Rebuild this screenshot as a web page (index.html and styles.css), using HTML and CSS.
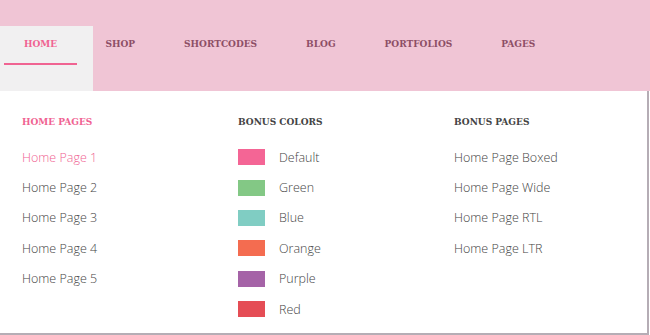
FILE: index.html
```html
<!DOCTYPE html>
<html lang="en">
<head>
    <meta charset="UTF-8">
    <meta name="viewport" content="width=device-width, initial-scale=1.0">
    <title>Mega Menu</title>
    <link rel="stylesheet" href="styles.css">
</head>
<body>
    <header class="header">
        <ul class="nav">
            <li class="nav-item active"><a href="#">Home</a></li>
            <li class="nav-item"><a href="#">Shop</a></li>
            <li class="nav-item"><a href="#">Shortcodes</a></li>
            <li class="nav-item"><a href="#">Blog</a></li>
            <li class="nav-item"><a href="#">Portfolios</a></li>
            <li class="nav-item"><a href="#">Pages</a></li>
        </ul>
    </header>
    <div class="mega-menu">
        <div class="column">
            <h4 class="column-title active">Home Pages</h4>
            <ul class="links">
                <li class="current"><a href="#">Home Page 1</a></li>
                <li><a href="#">Home Page 2</a></li>
                <li><a href="#">Home Page 3</a></li>
                <li><a href="#">Home Page 4</a></li>
                <li><a href="#">Home Page 5</a></li>
            </ul>
        </div>
        <div class="column">
            <h4 class="column-title">Bonus Colors</h4>
            <ul class="links">
                <li><span class="swatch default"></span><a href="#">Default</a></li>
                <li><span class="swatch green"></span><a href="#">Green</a></li>
                <li><span class="swatch blue"></span><a href="#">Blue</a></li>
                <li><span class="swatch orange"></span><a href="#">Orange</a></li>
                <li><span class="swatch purple"></span><a href="#">Purple</a></li>
                <li><span class="swatch red"></span><a href="#">Red</a></li>
            </ul>
        </div>
        <div class="column">
            <h4 class="column-title">Bonus Pages</h4>
            <ul class="links">
                <li><a href="#">Home Page Boxed</a></li>
                <li><a href="#">Home Page Wide</a></li>
                <li><a href="#">Home Page RTL</a></li>
                <li><a href="#">Home Page LTR</a></li>
            </ul>
        </div>
    </div>
</body>
</html>
```

FILE: styles.css
```css
body {
    margin: 0;
    font-family: "Open Sans", sans-serif;
    background-color: #ffffff;
}

.header {
    height: 91px;
    background-color: #f0c5d5;
}

.nav {
    display: flex;
    margin: 0;
    padding: 26px 0 0 0;
    list-style: none;
}

.nav-item {
    height: 65px;
    position: relative;
}

.nav-item a {
    display: block;
    padding: 11px 24.5px 0 24.5px;
    font-family: "DejaVu Serif", serif;
    font-stretch: condensed;
    font-size: 10px;
    font-weight: bold;
    line-height: 14px;
    text-transform: uppercase;
    text-decoration: none;
    color: #8d4f66;
}

.nav-item.active {
    width: 93px;
    margin-right: -12px;
    background-color: #f1f0f1;
}

.nav-item.active a {
    padding-left: 24px;
    color: #f06392;
}

.nav-item.active::after {
    content: "";
    position: absolute;
    left: 4px;
    top: 37px;
    width: 73px;
    height: 2px;
    background-color: #f06392;
}

.mega-menu {
    display: grid;
    grid-template-columns: 216px 216px 1fr;
    width: 625px;
    height: 242px;
    padding: 0 0 0 22px;
    border-right: 2px solid #b5adb5;
    border-bottom: 2px solid #b5adb5;
    box-sizing: content-box;
}

.column-title {
    margin: 24px 0 13px 0;
    font-family: "DejaVu Serif", serif;
    font-stretch: condensed;
    font-size: 10px;
    font-weight: bold;
    line-height: 14px;
    text-transform: uppercase;
    color: #444444;
}

.column-title.active {
    color: #f06392;
}

.links {
    margin: 0;
    padding: 0;
    list-style: none;
}

.links li {
    display: flex;
    align-items: center;
    height: 30.4px;
}

.links a {
    font-size: 12.5px;
    font-weight: 300;
    text-decoration: none;
    color: #444444;
}

.links li.current a {
    color: #f06392;
}

.swatch {
    width: 27px;
    height: 16px;
    margin-right: 14px;
}

.swatch.default { background-color: #f46595; }
.swatch.green { background-color: #83c885; }
.swatch.blue { background-color: #80cdc3; }
.swatch.orange { background-color: #f46c50; }
.swatch.purple { background-color: #a563a7; }
.swatch.red { background-color: #e54d55; }
```
